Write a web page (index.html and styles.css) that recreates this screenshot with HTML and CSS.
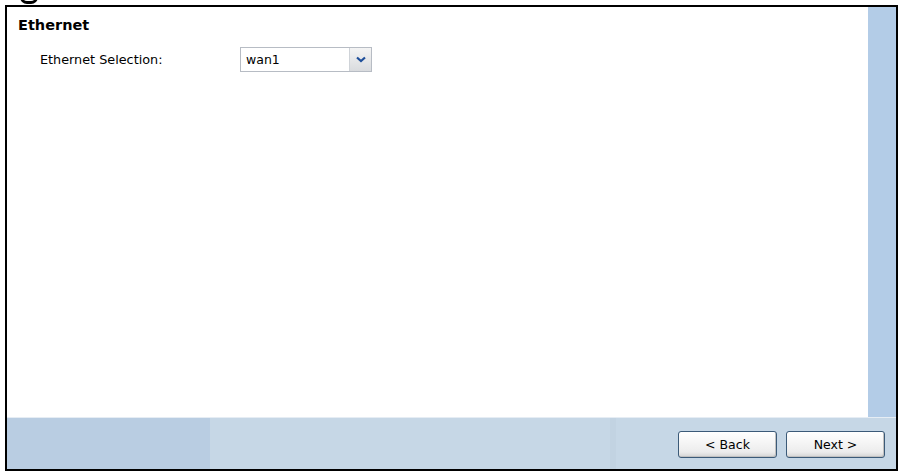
FILE: index.html
```html
<!DOCTYPE html>
<html lang="en">

<head>
  <meta charset="UTF-8">
  <title>Ethernet</title>
  <link rel="stylesheet" href="styles.css">
</head>

<body>
  <div class="clip"><div class="hook"></div></div>
  <div class="frame">
    <div class="main">
      <div class="panel">
        <h2>Ethernet</h2>
        <div class="row">
          <label for="eth">Ethernet Selection:</label>
          <div class="select">
            <span class="value">wan1</span>
            <span class="arrow">
              <svg width="10" height="7" viewBox="0 0 10 7">
                <path d="M1 1.5 L5 5 L9 1.5" fill="none" stroke="#1f4f9a" stroke-width="2.2"/>
              </svg>
            </span>
          </div>
        </div>
      </div>
      <div class="side"></div>
    </div>
    <div class="footer">
      <div class="foot-left"></div>
      <div class="foot-mid"></div>
      <div class="foot-right">
        <button class="btn">&lt; Back</button>
        <button class="btn">Next &gt;</button>
      </div>
    </div>
  </div>
</body>

</html>
```

FILE: styles.css
```css
body {
  margin: 0;
  background-color: #fff;
  font-family: "DejaVu Sans", Verdana, sans-serif;
  font-size: 12px;
  color: #000;
}

.clip {
  height: 5px;
  overflow: hidden;
  padding-left: 20px;
}

.hook {
  width: 12px;
  height: 5px;
  margin-top: -4px;
  border: 3px solid #000;
  border-top: none;
  border-radius: 0 0 7px 7px;
}

.frame {
  margin-left: 5px;
  width: 889px;
  height: 462px;
  border: 2px solid #000;
  display: flex;
  flex-direction: column;
}

.main {
  display: flex;
  height: 410px;
  border-bottom: 1px solid #e6edf4;
}

.panel {
  flex: 1;
  padding: 8px 11px;
}

.side {
  width: 28px;
  background-color: #b3cce7;
}

h2 {
  margin: 0;
  font-size: 14.5px;
  font-weight: bold;
  line-height: 20px;
}

.row {
  display: flex;
  align-items: center;
  margin-top: 12px;
  padding-left: 22px;
}

label {
  width: 200px;
  font-size: 12.8px;
}

.select {
  display: flex;
  width: 130px;
  height: 23px;
  border: 1px solid #b7bcc4;
  background-color: #fff;
}

.value {
  flex: 1;
  padding-left: 5px;
  line-height: 23px;
  font-size: 12.5px;
}

.arrow {
  width: 21px;
  display: flex;
  align-items: center;
  justify-content: center;
  border-left: 1px solid #cfd3d8;
  background: linear-gradient(#f4f4f4, #d9dbde);
}

.footer {
  flex: 1;
  display: flex;
  background-color: #c6d7e6;
}

.foot-left {
  width: 203px;
  background-color: #b9cde2;
}

.foot-mid {
  width: 400px;
  border-right: 6px solid #c2d3e2;
}

.foot-right {
  flex: 1;
  display: flex;
  justify-content: flex-end;
  align-items: center;
  gap: 9px;
  padding-right: 11px;
  padding-top: 2px;
}

.btn {
  width: 99px;
  height: 27px;
  font-family: "DejaVu Sans", Verdana, sans-serif;
  font-size: 12.5px;
  color: #000;
  border: 1px solid #3b5a78;
  border-radius: 3px;
  background: linear-gradient(#ffffff, #ececec 80%, #d4d4d4);
  box-shadow: inset -1px -1px 0 #c0c0c0;
}
```
